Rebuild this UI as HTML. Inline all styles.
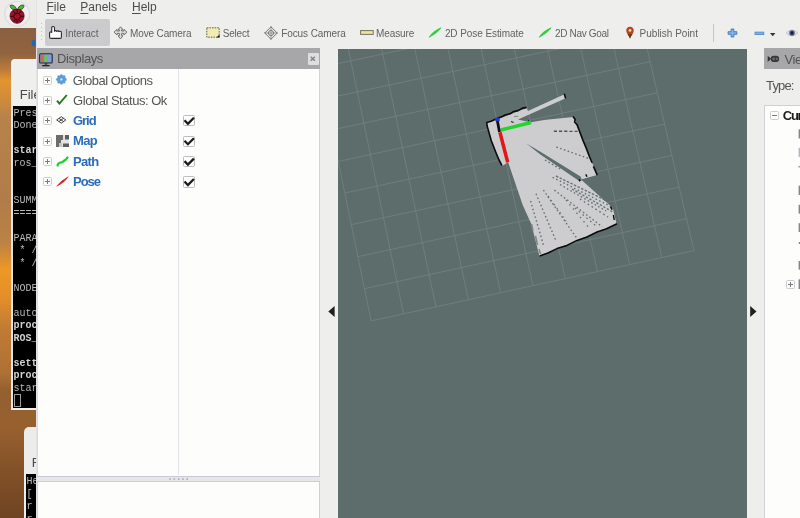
<!DOCTYPE html>
<html><head><meta charset="utf-8"><title>RViz</title>
<style>
*{margin:0;padding:0;box-sizing:border-box}
html,body{width:800px;height:518px;overflow:hidden;background:#eeeeed;font-family:"Liberation Sans",sans-serif;color:#4c4c4c}
.a{position:absolute}
.t{position:absolute;white-space:nowrap;line-height:1}
.menu{font-size:12px;color:#4c4c4c;top:.7px}
.menu u{text-decoration:underline;text-underline-offset:1.7px;text-decoration-thickness:1.2px}
.tb{font-size:10px;color:#626262;top:28.5px;letter-spacing:0}
.tree{font-size:13px;color:#555;letter-spacing:-.45px}
.treeb{font-size:13px;color:#2b6cb8;font-weight:bold;letter-spacing:-.9px}
.term{font-family:"Liberation Mono",monospace;font-size:10px;color:#b9b9b9;left:13.5px}
.term b{color:#d2d2d2}
.plus{position:absolute;width:9px;height:9px;border:1px solid #cdcdcd;background:#fcfcfc;border-radius:1.5px}
.plus:before{content:"";position:absolute;left:1px;top:3px;width:5px;height:1px;background:#7a7a7a}
.plus:after{content:"";position:absolute;left:3px;top:1px;width:1px;height:5px;background:#7a7a7a}
.minus:after{display:none}
.cb{position:absolute;width:11.5px;height:11.3px;border:1px solid #bdbdbd;background:#fdfdfd;border-radius:1.5px}
#root{position:absolute;left:0;top:0;width:800px;height:518px;will-change:transform;overflow:hidden}
</style></head><body><div id="root">

<!-- desktop strip -->
<div class="a" style="left:0;top:28px;width:36px;height:490px;background:linear-gradient(180deg,#8a6042 0px,#91643f 26px,#b87a3c 41px,#e4952f 53px,#d68d36 66px,#b8824a 90px,#b07c48 170px,#bc8244 215px,#ee9826 242px,#e38e2a 270px,#c07c34 300px,#b07034 345px,#93602f 362px,#98602f 400px,#845228 440px,#6e4422 490px)"></div>
<div class="a" style="left:0;top:0;width:36px;height:28px;background:#ecebe8"></div>
<svg class="a" style="left:0;top:0" width="36" height="52" viewBox="0 0 36 52">
  <circle cx="17.2" cy="13.9" r="12.4" fill="#eeeef0" stroke="#dcdcde" stroke-width="1.2"/>
  <path d="M16.7 9.6 C15.2 5.2 12 4.5 10.3 5.4 C10.1 8.6 12.6 10 16.7 9.6Z M17.5 9.6 C19 5.2 22.2 4.5 23.9 5.4 C24.1 8.6 21.6 10 17.5 9.6Z" fill="#55b03c" stroke="#2c4a1c" stroke-width=".9"/>
  <path d="M17.1 9.4 C20.6 9 24.1 11.8 24.1 15.8 C24.1 20.2 20.6 23.3 17.1 23.3 C13.6 23.3 10.1 20.2 10.1 15.8 C10.1 11.8 13.6 9 17.1 9.4Z" fill="#a3122a" stroke="#5a0a18" stroke-width=".8"/>
  <g fill="none" stroke="#3a0610" stroke-width="1.1" opacity=".9"><path d="M13 11.2 L15.4 13.6 L13.4 16.4 L15.6 19.4 L13.8 21.6 M21.2 11.2 L18.8 13.6 L20.8 16.4 L18.6 19.4 L20.4 21.6 M15.4 13.6 H18.8 M13.4 16.4 H10.6 M20.8 16.4 H23.6 M15.6 19.4 H18.6 M17.1 9.6 V13.4 M17.1 19.6 V23"/></g>
  <ellipse cx="33.5" cy="43" rx="2" ry="3.2" fill="#2566b4"/>
</svg>

<!-- terminal window 1 -->
<div class="a" style="left:11px;top:59px;width:25px;height:350.5px;background:#efefee;border-radius:4px 0 0 0"></div>
<div class="t" style="left:19.7px;top:88px;font-size:13px;color:#4a4a4a">File</div>
<div class="a" style="left:13px;top:106px;width:23px;height:302px;background:#000"></div>
<div class="a" style="left:11px;top:106px;width:2px;height:303px;background:#e4e4e4"></div>
<div class="t term" style="top:108px;line-height:12.48px;white-space:pre">Pres
Done

<b>star</b>
ros_


SUMM
====

PARA
 * /
 * /

NODE

auto
<b>proc</b>
<b>ROS_</b>

<b>sett</b>
<b>proc</b>
star</div>
<div class="a" style="left:13.5px;top:394px;width:7px;height:13px;border:1px solid #9c9c9c"></div>

<!-- window 2 -->
<div class="a" style="left:23.5px;top:426.5px;width:13px;height:92px;background:#ececeb;border-radius:5px 0 0 0"></div>
<div class="t" style="left:31.7px;top:456px;font-size:13px;color:#4a4a4a">F</div>
<div class="a" style="left:25.5px;top:474px;width:11px;height:44px;background:#000"></div>
<div class="t term" style="left:26.5px;top:476px;line-height:12.5px;white-space:pre">He
[
r
r</div>

<!-- RViz window -->
<div class="a" style="left:35.5px;top:0;width:765px;height:518px;background:#eeeeed"></div>
<div class="a" style="left:35.5px;top:0;width:1.5px;height:518px;background:#e2e2e6"></div>

<!-- menu -->
<div class="t menu" style="left:46.5px"><u>F</u>ile</div>
<div class="t menu" style="left:80.3px"><u>P</u>anels</div>
<div class="t menu" style="left:132px"><u>H</u>elp</div>

<!-- toolbar -->
<div class="a" style="left:40.5px;top:23px;width:1.5px;height:20px;background:repeating-linear-gradient(180deg,#c0c0c0 0 1.5px,transparent 1.5px 4px)"></div>
<div class="a" style="left:45px;top:19px;width:65px;height:27px;background:#cbcbcd;border-radius:2px"></div>
<svg class="a" style="left:48px;top:25px" width="16" height="16" viewBox="0 0 16 16">
  <path d="M3.7 7.4 V2.8 C3.7 1 6.5 1 6.5 2.8 V6.2 C7 5.3 8.6 5.5 8.7 6.5 C9.2 5.6 10.7 5.7 10.9 6.6 C11.5 5.9 13.4 6.1 13.4 7.5 V12 C13.4 13 13 13.4 12.2 13.4 H3.2 C2.2 13.4 1.6 12.8 1.6 12 V8 C1.6 6.8 3 6.6 3.7 7.4Z" fill="#fff" stroke="#2a2a2a" stroke-width="1.1" stroke-linejoin="round"/>
</svg>
<div class="t tb" style="left:65.2px">Interact</div>

<svg class="a" style="left:113px;top:26px" width="15" height="14" viewBox="0 0 15 14">
  <path d="M7.5 .8 L10 3.8 H8.6 V5 H11 V3.4 L14 6.2 L11 9 V7.4 H8.6 V9.8 H10 L7.5 12.8 L5 9.8 H6.4 V7.4 H4 V9 L1 6.2 L4 3.4 V5 H6.4 V3.8 H5Z" fill="#dedede" stroke="#707070" stroke-width="1" stroke-linejoin="round"/>
</svg>
<div class="t tb" style="left:130px;letter-spacing:-.13px">Move Camera</div>

<svg class="a" style="left:206px;top:27px" width="14" height="11" viewBox="0 0 14 11">
  <rect x=".8" y=".8" width="12.4" height="9.4" fill="#f1ebb6" stroke="#6b6436" stroke-width="1" stroke-dasharray="1.6 1"/>
  <path d="M13.5 7.5 V10.6 H10.5Z" fill="#111"/>
</svg>
<div class="t tb" style="left:222.7px;letter-spacing:-.2px">Select</div>

<svg class="a" style="left:264px;top:26px" width="14" height="14" viewBox="0 0 14 14">
  <g fill="none" stroke="#777" stroke-width="1">
  <path d="M7 .8 L13.2 7 L7 13.2 L.8 7Z"/><circle cx="7" cy="7" r="2.6"/><path d="M7 0 V14 M0 7 H14" stroke-width=".7"/></g>
</svg>
<div class="t tb" style="left:281.2px;letter-spacing:-.09px">Focus Camera</div>

<svg class="a" style="left:359.5px;top:29.8px" width="14" height="6" viewBox="0 0 14 6">
  <rect x=".6" y=".6" width="12.6" height="3.8" fill="#ece2a6" stroke="#77725a" stroke-width="1"/>
</svg>
<div class="t tb" style="left:376px;letter-spacing:-.1px">Measure</div>

<svg class="a" style="left:428px;top:27px" width="14" height="11" viewBox="0 0 14 11">
  <path d="M1.2 10.2 C4 5.5 8 3.2 13 .8 C10.5 4.5 6.5 7.5 1.2 10.2Z" fill="#2fce3c" stroke="#2fce3c" stroke-width=".8" stroke-linejoin="round"/>
</svg>
<div class="t tb" style="left:444.9px;letter-spacing:-.08px">2D Pose Estimate</div>

<svg class="a" style="left:538px;top:27px" width="14" height="11" viewBox="0 0 14 11">
  <path d="M1.2 10.2 C4 5.5 8 3.2 13 .8 C10.5 4.5 6.5 7.5 1.2 10.2Z" fill="#2fce3c" stroke="#2fce3c" stroke-width=".8" stroke-linejoin="round"/>
</svg>
<div class="t tb" style="left:555px;letter-spacing:-.33px">2D Nav Goal</div>

<svg class="a" style="left:625px;top:26px" width="10" height="13" viewBox="0 0 10 13">
  <path d="M5 12.6 C4 9.5 1.2 7.6 1.2 4.6 C1.2 2.4 2.9 .8 5 .8 C7.1 .8 8.8 2.4 8.8 4.6 C8.8 7.6 6 9.5 5 12.6Z" fill="#b4441e"/>
  <path d="M5 12.6 C4.4 10.8 3.4 9.5 2.6 8.2 H7.4 C6.6 9.5 5.6 10.8 5 12.6Z" fill="#6a3418"/>
  <circle cx="5" cy="4.4" r="1.4" fill="#f1d6c2"/>
</svg>
<div class="t tb" style="left:639.6px">Publish Point</div>

<div class="a" style="left:713px;top:24px;width:1px;height:18px;background:#c6c6c6"></div>
<svg class="a" style="left:726.5px;top:28px" width="11" height="10" viewBox="0 0 11 10">
  <path d="M4.1 1 H6.9 V3.7 H9.9 V6.3 H6.9 V9 H4.1 V6.3 H1.1 V3.7 H4.1Z" fill="#7db2ea" stroke="#3f78ba" stroke-width=".9"/>
</svg>
<svg class="a" style="left:754px;top:30.5px" width="11" height="5" viewBox="0 0 11 5">
  <rect x="1" y="1.1" width="8.8" height="2.5" fill="#7db2ea" stroke="#4a86c8" stroke-width=".8"/>
</svg>
<svg class="a" style="left:769.5px;top:33px" width="6" height="4" viewBox="0 0 6 4"><path d="M0 0 H5.4 L2.7 3.2Z" fill="#333"/></svg>
<svg class="a" style="left:786px;top:28.5px" width="14" height="8" viewBox="0 0 14 8">
  <path d="M.3 4 C3 .2 9 .2 11.7 4 C9 7.6 3 7.6 .3 4Z" fill="#e2e2e6" stroke="#b0b0b8" stroke-width=".7"/>
  <circle cx="6" cy="4" r="2.7" fill="#3d4f7c"/><circle cx="6" cy="4" r="1.2" fill="#161a2c"/>
</svg>

<!-- Displays panel -->
<div class="a" style="left:37px;top:48px;width:283px;height:20.8px;background:#a7a7aa"></div>
<svg class="a" style="left:39.3px;top:52.7px" width="14" height="14" viewBox="0 0 14 14">
  <rect x=".6" y=".8" width="12.6" height="9.2" rx="1" fill="#7c8cb0" stroke="#2a2a44" stroke-width="1.1"/>
  <rect x="1.6" y="1.8" width="3.6" height="7.2" fill="#d4645c"/><rect x="5.2" y="1.8" width="3.6" height="7.2" fill="#66c65e"/><rect x="8.8" y="1.8" width="3.4" height="7.2" fill="#7ea0dc"/>
  <path d="M5.6 10.4 H8.2 V11.6 H5.6Z" fill="#222"/><rect x="3.2" y="12" width="7.4" height="1.3" fill="#222"/>
</svg>
<div class="t tree" style="left:57px;top:52.2px;color:#535353;letter-spacing:-.4px">Displays</div>
<div class="a" style="left:308px;top:52.5px;width:10.6px;height:12px;background:#dedede;border-radius:1px"></div>
<svg class="a" style="left:310.4px;top:55.6px" width="5.6" height="5.6" viewBox="0 0 5.6 5.6"><path d="M.7 .7 L4.9 4.9 M4.9 .7 L.7 4.9" stroke="#858585" stroke-width="1.5"/></svg>

<div class="a" style="left:37px;top:68.8px;width:283px;height:406.8px;background:#fdfdfc;border-left:1px solid #dcdce0;border-right:1.4px solid #d4d4d6"></div>
<div class="a" style="left:178.4px;top:68.8px;width:1.1px;height:406px;background:#e1e1e8"></div>

<div class="plus" style="left:43px;top:75.5px"></div>
<div class="plus" style="left:43px;top:96px"></div>
<div class="plus" style="left:43px;top:116.2px"></div>
<div class="plus" style="left:43px;top:136.6px"></div>
<div class="plus" style="left:43px;top:157px"></div>
<div class="plus" style="left:43px;top:177.4px"></div>

<!-- icons -->
<svg class="a" style="left:55.8px;top:73.8px" width="10.8" height="10.8" viewBox="0 0 12 12">
  <g fill="#5f9ad8"><circle cx="6" cy="6" r="3.6"/>
  <circle cx="6" cy="1.9" r="1.7"/><circle cx="6" cy="10.1" r="1.7"/><circle cx="1.9" cy="6" r="1.7"/><circle cx="10.1" cy="6" r="1.7"/>
  <circle cx="3.1" cy="3.1" r="1.7"/><circle cx="8.9" cy="3.1" r="1.7"/><circle cx="3.1" cy="8.9" r="1.7"/><circle cx="8.9" cy="8.9" r="1.7"/></g>
  <circle cx="6" cy="6" r="1.3" fill="#d6e6f8"/>
</svg>
<svg class="a" style="left:55.5px;top:94px" width="12" height="11" viewBox="0 0 12 11">
  <path d="M1 6.6 L3.4 9.6 L10.8 1" fill="none" stroke="#1f7a1f" stroke-width="1.9" stroke-linejoin="miter"/>
</svg>
<svg class="a" style="left:56.4px;top:116.2px" width="10.5" height="7.9" viewBox="0 0 12 9">
  <path d="M6 .8 L11.2 4.5 L6 8.2 L.8 4.5Z M3.4 2.65 L8.6 6.35 M8.6 2.65 L3.4 6.35" fill="none" stroke="#3a3a3a" stroke-width="1.1"/>
</svg>
<svg class="a" style="left:55.5px;top:135px" width="13" height="12" viewBox="0 0 13 12">
  <rect x="0" y="0" width="13" height="12" fill="#e4e4e4"/>
  <rect x="0" y="0" width="5" height="12" fill="#6c6c6c"/><rect x="5" y="0" width="2" height="5" fill="#6c6c6c"/>
  <rect x="9" y="0" width="4" height="4.5" fill="#5e5e5e"/><rect x="7" y="8.5" width="6" height="3.5" fill="#5e5e5e"/>
  <rect x="3" y="8" width="3" height="4" fill="#c4c4c4"/>
</svg>
<svg class="a" style="left:55.5px;top:155.5px" width="13" height="11" viewBox="0 0 13 11">
  <path d="M1.6 9.4 C2.4 5.4 4.8 7.6 7 5.6 C9 3.8 9.4 4.6 11.4 1.6" fill="none" stroke="#25cf2f" stroke-width="2.4" stroke-linecap="round"/>
</svg>
<svg class="a" style="left:55.5px;top:176px" width="13" height="11" viewBox="0 0 13 11">
  <path d="M.8 10.2 C4 6 8 3.4 12.2 .8 C9.6 4.8 6 7.6 .8 10.2Z" fill="#d6281e" stroke="#d6281e" stroke-width=".6"/>
  <circle cx="6.6" cy="5.4" r=".9" fill="#5a3aa0"/>
</svg>

<div class="t tree" id="go" style="left:72.8px;top:73.6px">Global Options</div>
<div class="t tree" id="gs" style="left:73.1px;top:93.6px;letter-spacing:-.48px">Global Status: Ok</div>
<div class="t treeb" id="grid" style="left:73px;top:113.8px;letter-spacing:-1.05px">Grid</div>
<div class="t treeb" id="map" style="left:73px;top:134.2px;letter-spacing:-.65px">Map</div>
<div class="t treeb" id="path" style="left:73px;top:154.6px;letter-spacing:-.68px">Path</div>
<div class="t treeb" id="pose" style="left:73px;top:175px;letter-spacing:-1px">Pose</div>

<div class="cb" style="left:183.2px;top:115.2px"></div>
<div class="cb" style="left:183.2px;top:135.6px"></div>
<div class="cb" style="left:183.2px;top:156.0px"></div>
<div class="cb" style="left:183.2px;top:176.4px"></div>
<svg class="a" style="left:183.2px;top:115.2px" width="12" height="74" viewBox="0 0 12 74"><g fill="none" stroke="#1c1c1c" stroke-width="2.3"><path d="M1.5 5.3 L4.9 8.8 L10.9 2.8"/><path d="M1.5 25.7 L4.9 29.2 L10.9 23.2"/><path d="M1.5 46.1 L4.9 49.6 L10.9 43.6"/><path d="M1.5 66.5 L4.9 70.0 L10.9 64.0"/></g></svg>

<!-- splitter + description -->
<div class="a" style="left:37px;top:475.6px;width:283.3px;height:6.3px;background:#e7e7e7;border-top:1px solid #c9c9dc;border-bottom:1px solid #cfcfc8"></div>
<svg class="a" style="left:168px;top:477px" width="22" height="4" viewBox="0 0 22 4"><g fill="#a2a2a6"><rect x="1.3" y="1.3" width="1.5" height="1.5"/><rect x="5.6" y="1.3" width="1.5" height="1.5"/><rect x="9.9" y="1.3" width="1.5" height="1.5"/><rect x="14.2" y="1.3" width="1.5" height="1.5"/><rect x="18.5" y="1.3" width="1.5" height="1.5"/></g></svg>
<div class="a" style="left:37px;top:481.9px;width:283.3px;height:40px;background:#fdfdfc;border:1px solid #d0d0d0;border-top:none"></div>

<!-- collapse arrows -->
<svg class="a" style="left:328px;top:305.5px" width="7" height="11" viewBox="0 0 7 11"><path d="M6.6 0 V11 L.3 5.5Z" fill="#202020"/></svg>
<svg class="a" style="left:749.8px;top:305.5px" width="7" height="11" viewBox="0 0 7 11"><path d="M.2 0 V11 L6.5 5.5Z" fill="#202020"/></svg>

<!-- 3D view -->
<div class="a" style="left:337.7px;top:48.5px;width:409px;height:470px;background:#5d6d6c;overflow:hidden">
<svg class="a" style="left:-.7px;top:-.5px" width="410" height="471" viewBox="0 0 410 471">
  <g stroke="#93a1a3" stroke-width=".9" opacity=".36" fill="none"><line x1="34.1" y1="272.9" x2="-30.7" y2="-42.2"/><line x1="34.1" y1="272.9" x2="356.9" y2="202.6"/><line x1="66.5" y1="265.8" x2="1.0" y2="-49.0"/><line x1="27.5" y1="240.7" x2="349.5" y2="170.7"/><line x1="98.9" y1="258.8" x2="32.7" y2="-55.7"/><line x1="20.9" y1="208.6" x2="342.2" y2="139.0"/><line x1="131.3" y1="251.7" x2="64.3" y2="-62.4"/><line x1="14.3" y1="176.7" x2="334.9" y2="107.5"/><line x1="163.6" y1="244.7" x2="95.9" y2="-69.1"/><line x1="7.8" y1="145.0" x2="327.6" y2="76.1"/><line x1="195.9" y1="237.7" x2="127.4" y2="-75.8"/><line x1="1.3" y1="113.4" x2="320.4" y2="44.8"/><line x1="228.2" y1="230.6" x2="158.9" y2="-82.5"/><line x1="-5.2" y1="82.0" x2="313.2" y2="13.7"/><line x1="260.4" y1="223.6" x2="190.4" y2="-89.2"/><line x1="-11.6" y1="50.7" x2="306.0" y2="-17.2"/><line x1="292.6" y1="216.6" x2="221.9" y2="-95.8"/><line x1="-18.0" y1="19.6" x2="298.9" y2="-48.0"/><line x1="324.8" y1="209.6" x2="253.3" y2="-102.5"/><line x1="-24.3" y1="-11.4" x2="291.8" y2="-78.6"/><line x1="356.9" y1="202.6" x2="284.7" y2="-109.1"/><line x1="-30.7" y1="-42.2" x2="284.7" y2="-109.1"/></g>
  <g fill="#cdcdcf">
    <polygon points="149.5,75.0 160.5,71.5 189.5,60.0 191.0,63.0 227.5,46.2 229.3,50.0 181.0,71.5 194.0,74.4 163.5,83.0"/>
    <polygon points="149.5,75.0 160.5,71.5 162.4,83.4 171.2,114.0 165.5,118.0 158.7,104.0 154.3,92.7 150.5,81.4"/>
    <polygon points="162.5,83.2 194.0,74.3 207.0,72.0 236.2,69.0 238.5,73.0 255.1,114.7 260.1,127.1 244.0,131.5 275.8,160.0 279.6,176.1 202.4,207.9 194.3,175.9 185.7,157.0 171.2,114.6"/>
  </g>
  <polygon fill="#5d6d6c" points="189.4,95.6 203.0,103.6 243.5,128.6 245.0,132.3 241.8,132.8 203.0,106.2"/>
  <g fill="none" stroke="#5c6a6a" stroke-width="1.4" stroke-dasharray="1.6 2.4" opacity=".9">
    <polyline points="215.6,129.3 274.3,158.7"/><polyline points="219.0,128.0 275.0,155.5" stroke-dasharray="2.5 1.5"/><polyline points="223.0,136.5 269.0,163.0"/>
    <polyline points="217.4,142.1 265.2,178.8"/><polyline points="206.4,142.1 239.5,189.9"/>
    <polyline points="199.0,145.8 219.3,193.5"/><polyline points="193.6,153.0 206.4,197.0"/>
    <polyline points="219.3,99.0 253.0,111.0"/><polyline points="208.0,112.0 225.0,122.0"/>
    <polyline points="229.0,152.0 253.0,181.0" stroke-dasharray="1.5 4"/><polyline points="235.0,141.0 276.0,164.0" stroke-dasharray="2.2 1.8"/><polyline points="243.0,151.0 271.0,169.0" stroke-dasharray="1.6 3"/><polyline points="211.0,148.0 229.0,173.0" stroke-dasharray="1.4 3.6"/><polyline points="238.0,160.0 259.0,178.0" stroke-dasharray="1.6 3.4"/>
  </g>
  <polyline fill="none" stroke="#4c5656" stroke-width="1.4" stroke-dasharray="3.2 2" points="216.8,83.2 240.6,83.4"/>
  <g fill="none" stroke="#7d8787" stroke-width="1.5"><polyline points="194.6,176.0 196.0,183.0"/><polyline points="198.5,188.0 200.5,197.0"/><polyline points="202.0,201.0 203.5,206.0"/></g>
  <g fill="none" stroke="#0b0b0b" stroke-width="1.6" stroke-linejoin="round">
    <polyline points="189.5,59.4 185.0,60.4 181.0,62.6 176.0,63.8 173.0,65.8 168.0,67.0 165.0,68.6 160.0,70.6 154.0,73.2 149.8,74.6 150.0,77.5 151.4,82.5 154.3,92.7 158.7,104.0 162.0,112.0 165.0,117.6"/>
    <polyline points="236.0,68.6 238.2,71.4 237.6,74.0 240.0,76.6 242.4,83.0 245.6,91.4 249.4,100.6 252.6,109.0 255.1,114.7"/>
    <polyline points="256.4,118.4 260.3,127.3"/>
    <polyline points="280.0,175.8 269.0,181.0 260.0,184.0 250.0,189.0 240.0,192.4 230.0,197.4 220.0,200.6 211.0,205.0 202.6,208.0"/>
    <polyline points="227.2,45.8 228.7,50.6" stroke-width="1.6"/>
    <polyline points="242.0,131.4 243.2,133.2"/><polyline points="273.6,158.6 275.2,161.6"/><polyline points="276.4,167.0 277.2,172.0" stroke-width="1.4"/>
    <polyline points="248.8,126.4 250.0,128.8" stroke-width="1.4"/>
  </g>
  <g fill="none" stroke="#8a9292" stroke-width="1.1"><polyline points="177.0,68.6 181.4,68.2"/><polyline points="174.0,73.6 176.6,74.6" stroke="#222"/><polyline points="191.2,72.0 191.8,73.4" stroke="#222"/></g>
  <polyline fill="none" stroke="#101010" stroke-width="2.8" points="160.2,72.0 162.5,84.0"/>
  <polygon fill="#2438c8" points="158.0,69.8 162.6,69.8 162.8,73.2 158.4,73.2"/>
  <polyline fill="none" stroke="#22d52a" stroke-width="3.4" points="163.9,82.0 194.1,74.5"/>
  <polyline fill="none" stroke="#e01818" stroke-width="3.5" points="162.9,84.2 170.7,114.2"/>

</svg>
</div>

<!-- Views panel -->
<div class="a" style="left:764px;top:48px;width:36px;height:20.8px;background:#a7a7aa"></div>
<svg class="a" style="left:766.8px;top:55.2px" width="12.8" height="7.8" viewBox="0 0 14 9">
  <path d="M.4 .8 L4.4 4.4 L.4 8.2Z" fill="#333"/><rect x="4" y="1" width="9.6" height="7" rx="3" fill="#3a3a3a"/><circle cx="7.4" cy="4.5" r="1.5" fill="#6b6b6b"/><circle cx="11" cy="4.5" r="1.3" fill="#6b6b6b"/>
</svg>
<div class="t tree" style="left:784.4px;top:52.6px;font-size:13px;color:#535353;letter-spacing:-.3px">Vie</div>
<div class="t tree" id="type" style="left:766px;top:79.2px;letter-spacing:-.84px">Type:</div>
<div class="a" style="left:764px;top:105.3px;width:40px;height:420px;background:#fdfdfc;border:1px solid #d0d0d6"></div>
<div class="plus minus" style="left:770.2px;top:111.2px"></div>
<div class="t" style="left:782.8px;top:109.2px;font-size:13px;font-weight:bold;color:#1c1c1c;letter-spacing:-1.3px">Cur</div>
<div class="plus" style="left:786px;top:280.2px"></div>
<svg class="a" style="left:796px;top:105px" width="4" height="200" viewBox="0 0 4 200">
  <g fill="#85858c"><rect x="2.6" y="24.3" width="1.4" height="9.2"/><rect x="2.6" y="42.8" width="1.4" height="9.2" fill="#b4b6c8"/><rect x="2.4" y="61.2" width="1.6" height="1.2"/>
  <rect x="2.6" y="80.7" width="1.4" height="9.3"/><rect x="2.6" y="99.8" width="1.4" height="8.8"/><rect x="2.6" y="118.2" width="1.4" height="8.8"/><rect x="2.8" y="137" width="1.2" height="2"/>
  <rect x="2.6" y="156" width="1.4" height="8.6"/><rect x="2.6" y="174.3" width="1.4" height="9.7"/></g>
</svg>

</div></body></html>
